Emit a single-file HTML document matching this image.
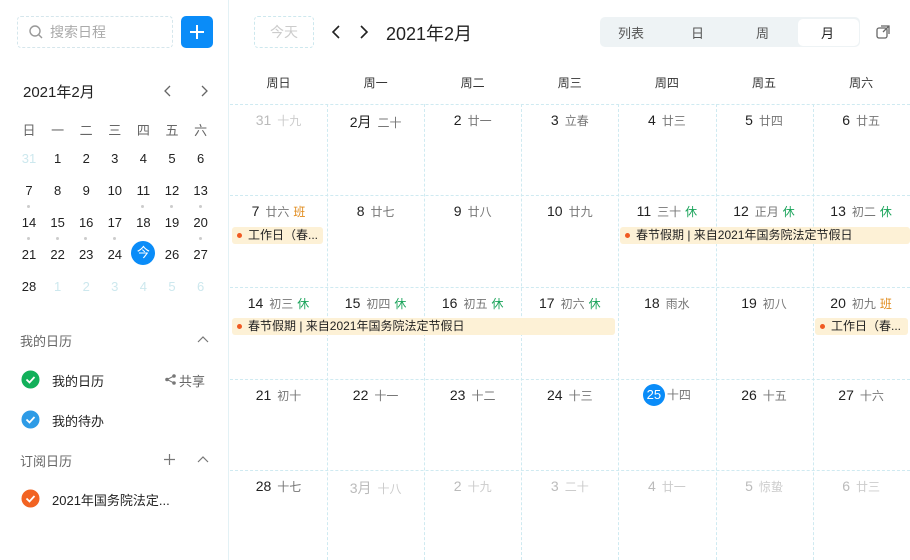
<!DOCTYPE html>
<html><head><meta charset="utf-8"><style>
*{margin:0;padding:0;box-sizing:border-box}
body{width:910px;height:560px;overflow:hidden;background:#fff;font-family:"Liberation Sans","Noto Sans CJK SC",sans-serif;color:#222;position:relative}
.a{position:absolute}
.side{left:0;top:0;width:229px;height:560px;border-right:1px solid #e3f1f5}
.search{left:17px;top:16px;width:156px;height:32px;border:1px dashed #d5e6ec;border-radius:4px;color:#aaa;font-size:14px;line-height:30px;padding-left:32px}
.plus{left:181px;top:16px;width:32px;height:32px;background:#0a8cf8;border-radius:5px}
.mc{font-size:13px;text-align:center;width:28px}
.cell{font-size:14px}
.lun{font-size:12px;color:#777;margin-left:6px}
.xiu{color:#1aa35a;font-size:12px;margin-left:4px}
.ban{color:#e08a1a;font-size:12px;margin-left:4px}
.ev{height:17px;background:#fdf1d6;font-size:12px;line-height:17px;border-radius:3px;white-space:nowrap;overflow:hidden}
.ev:before{content:"";display:inline-block;width:5px;height:5px;border-radius:50%;background:#f05a22;margin:0 6px 1px 5px;vertical-align:middle}
.vl{top:104px;width:0;height:456px;border-left:1px dashed #cfeaf1}
.hl{left:230px;width:680px;height:0;border-top:1px dashed #cfeaf1}
.wk{top:74px;font-size:12px;width:97px;text-align:center;color:#333}
.gray{color:#bbb}
</style></head><body>
<div class="a side"></div>
<div class="a search">搜索日程</div>
<svg class="a" style="left:28px;top:24px" width="16" height="16"><circle cx="7" cy="7" r="5" fill="none" stroke="#999" stroke-width="1.4"/><path d="M10.5 10.5l3.5 3.5" stroke="#999" stroke-width="1.4"/></svg>
<div class="a plus"><svg width="32" height="32"><path d="M16 9v14M9 16h14" stroke="#fff" stroke-width="2"/></svg></div>
<div class="a" style="left:23px;top:81px;font-size:15px">2021年2月</div>
<svg class="a" style="left:162px;top:84px" width="12" height="14"><path d="M8 2L3 7l5 5" fill="none" stroke="#666" stroke-width="1.3"/></svg>
<svg class="a" style="left:198px;top:84px" width="12" height="14"><path d="M4 2l5 5-5 5" fill="none" stroke="#666" stroke-width="1.3"/></svg>
<div id="mini"></div>
<div class="a" style="left:20px;top:331px;font-size:13px;color:#666">我的日历</div>
<svg class="a" style="left:196px;top:334px" width="14" height="10"><path d="M2 8l5-5 5 5" fill="none" stroke="#777" stroke-width="1.2"/></svg>
<svg class="a" style="left:21px;top:370px" width="19" height="19"><circle cx="9.5" cy="9.5" r="9" fill="#12b05a"/><path d="M5.5 9.5l3 3 5-5.5" fill="none" stroke="#fff" stroke-width="1.8"/></svg>
<div class="a" style="left:52px;top:371px;font-size:13px">我的日历</div>
<svg class="a" style="left:164px;top:373px" width="13" height="13"><circle cx="10" cy="3" r="1.8" fill="#777"/><circle cx="3" cy="6.5" r="1.8" fill="#777"/><circle cx="10" cy="10" r="1.8" fill="#777"/><path d="M10 3L3 6.5 10 10" fill="none" stroke="#777" stroke-width="1"/></svg>
<div class="a" style="left:179px;top:371px;font-size:13px;color:#666">共享</div>
<svg class="a" style="left:21px;top:410px" width="19" height="19"><circle cx="9.5" cy="9.5" r="9" fill="#2e9be6"/><path d="M5.5 9.5l3 3 5-5.5" fill="none" stroke="#fff" stroke-width="1.8"/></svg>
<div class="a" style="left:52px;top:411px;font-size:13px">我的待办</div>
<div class="a" style="left:20px;top:451px;font-size:13px;color:#666">订阅日历</div>
<svg class="a" style="left:163px;top:453px" width="13" height="13"><path d="M6.5 1v11M1 6.5h11" stroke="#777" stroke-width="1.2"/></svg>
<svg class="a" style="left:196px;top:454px" width="14" height="10"><path d="M2 8l5-5 5 5" fill="none" stroke="#777" stroke-width="1.2"/></svg>
<svg class="a" style="left:21px;top:489px" width="19" height="19"><circle cx="9.5" cy="9.5" r="9" fill="#f26322"/><path d="M5.5 9.5l3 3 5-5.5" fill="none" stroke="#fff" stroke-width="1.8"/></svg>
<div class="a" style="left:52px;top:490px;font-size:13px">2021年国务院法定...</div>

<div class="a" style="left:254px;top:16px;width:60px;height:32px;border:1px dashed #cde8ee;border-radius:4px;color:#ccc;font-size:14px;line-height:30px;text-align:center">今天</div>
<svg class="a" style="left:330px;top:24px" width="12" height="16"><path d="M9 2L3 8l6 6" fill="none" stroke="#222" stroke-width="1.6"/></svg>
<svg class="a" style="left:358px;top:24px" width="12" height="16"><path d="M3 2l6 6-6 6" fill="none" stroke="#222" stroke-width="1.6"/></svg>
<div class="a" style="left:386px;top:20px;font-size:18px">2021年2月</div>
<div class="a" style="left:600px;top:17px;width:260px;height:30px;background:#eef3f5;border-radius:5px"></div>
<div class="a" style="left:798px;top:19px;width:61px;height:27px;background:#fff;border-radius:5px"></div>
<div class="a" style="left:618px;top:23px;font-size:13px;color:#555">列表</div>
<div class="a" style="left:691px;top:23px;font-size:13px;color:#555">日</div>
<div class="a" style="left:756px;top:23px;font-size:13px;color:#555">周</div>
<div class="a" style="left:821px;top:23px;font-size:13px">月</div>
<svg class="a" style="left:876px;top:25px" width="14" height="14"><rect x="1" y="3" width="10" height="10" rx="2" fill="none" stroke="#666" stroke-width="1.3"/><path d="M5 1h8v8M7 7l6-6" fill="none" stroke="#666" stroke-width="1.3"/></svg>
<div id="grid"></div>
<script>
var h='';
var wk=['日','一','二','三','四','五','六'];
for(var i=0;i<7;i++){h+='<div class="a mc" style="left:'+(15+i*28.6)+'px;top:120px;color:#666">'+wk[i]+'</div>';}
var md=[[31,1,2,3,4,5,6],[7,8,9,10,11,12,13],[14,15,16,17,18,19,20],[21,22,23,24,25,26,27],[28,1,2,3,4,5,6]];
for(var r=0;r<5;r++)for(var c=0;c<7;c++){var d=md[r][c],x=15+c*28.6,y=151+r*32;var g=(r==0&&c==0)||(r==4&&c>0);
if(r==3&&c==4)h+='<div class="a" style="left:'+(x+2)+'px;top:'+(y-6)+'px;width:24px;height:24px;border-radius:50%;background:#0a8cf8;color:#fff;font-size:13px;line-height:24px;text-align:center">今</div>';
else h+='<div class="a mc" style="left:'+x+'px;top:'+y+'px;color:'+(g?'#cde8ee':'#222')+'">'+d+'</div>';}
var dots=[[0,205],[4,205],[5,205],[6,205],[0,237],[1,237],[2,237],[3,237],[6,237]];
dots.forEach(function(p){h+='<div class="a" style="left:'+(27+p[0]*28.6)+'px;top:'+p[1]+'px;width:3px;height:3px;border-radius:50%;background:#ccc"></div>';});
document.getElementById('mini').outerHTML=h;
h='';
var wn=['周日','周一','周二','周三','周四','周五','周六'];
for(var i=0;i<7;i++)h+='<div class="a wk" style="left:'+(230+i*97.1)+'px">'+wn[i]+'</div>';
for(var i=1;i<7;i++)h+='<div class="a vl" style="left:'+(230+i*97.1)+'px"></div>';
[104,195,287,379,470].forEach(function(y){h+='<div class="a hl" style="top:'+y+'px"></div>';});
var data=[
[['31','十九',1],['2月','二十'],['2','廿一'],['3','立春'],['4','廿三'],['5','廿四'],['6','廿五']],
[['7','廿六','b'],['8','廿七'],['9','廿八'],['10','廿九'],['11','三十','x'],['12','正月','x'],['13','初二','x']],
[['14','初三','x'],['15','初四','x'],['16','初五','x'],['17','初六','x'],['18','雨水'],['19','初八'],['20','初九','b']],
[['21','初十'],['22','十一'],['23','十二'],['24','十三'],['25','十四','t'],['26','十五'],['27','十六']],
[['28','十七'],['3月','十八',1],['2','十九',1],['3','二十',1],['4','廿一',1],['5','惊蛰',1],['6','廿三',1]]];
var ry=[104,195,287,379,470];
for(var r=0;r<5;r++)for(var c=0;c<7;c++){var e=data[r][c],x=230+c*97.1,y=ry[r]+8;
var t=e[2]===1?'<span class="gray">'+e[0]+'</span><span class="lun" style="color:#ccc">'+e[1]+'</span>':
(e[2]=='t'?'<span style="display:inline-block;width:22px;height:22px;border-radius:50%;background:#0a8cf8;color:#fff;text-align:center;line-height:22px;font-size:13px">'+e[0]+'</span><span class="lun" style="margin-left:2px">'+e[1]+'</span>':
e[0]+'<span class="lun">'+e[1]+'</span>'+(e[2]=='x'?'<span class="xiu">休</span>':e[2]=='b'?'<span class="ban">班</span>':''));
h+='<div class="a cell" style="left:'+x+'px;top:'+(e[2]=='t'?y-3:y)+'px;width:97px;text-align:center">'+t+'</div>';}
h+='<div class="a ev" style="left:232px;top:227px;width:91px">工作日（春...</div>';
h+='<div class="a ev" style="left:620px;top:227px;width:290px">春节假期 | 来自2021年国务院法定节假日</div>';
h+='<div class="a ev" style="left:232px;top:318px;width:383px">春节假期 | 来自2021年国务院法定节假日</div>';
h+='<div class="a ev" style="left:815px;top:318px;width:93px">工作日（春...</div>';
document.getElementById('grid').outerHTML=h;
</script>
</body></html>
